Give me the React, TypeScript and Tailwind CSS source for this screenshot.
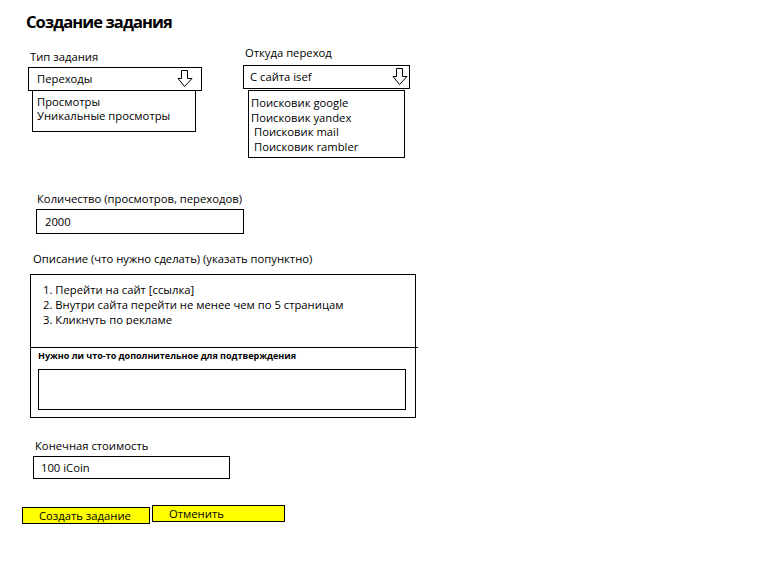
const ArrowDown = () => (
  <svg width="16" height="18" viewBox="0 0 16 18" className="shrink-0">
    <path
      d="M4.5 0.5 H10.5 V8.5 H15 L7.5 16.5 L1 8.5 H4.5 Z"
      fill="none"
      stroke="#000"
      strokeWidth="1"
    />
  </svg>
);

const sourceOptions = [
  { label: 'Поисковик google', pad: 'pl-[2px]' },
  { label: 'Поисковик yandex', pad: 'pl-[2px]' },
  { label: 'Поисковик mail', pad: 'pl-[5px]' },
  { label: 'Поисковик rambler', pad: 'pl-[5px]' },
];

export default function App() {
  return (
    <div className="h-[587px] w-[781px] overflow-hidden bg-white font-['Open_Sans',sans-serif] text-[11.25px] leading-[16px] text-black">
      <h1 className="ml-[26px] pt-[10px] text-[16.5px] font-bold leading-[24px] tracking-[-0.9px]">
        Создание задания
      </h1>

      <div className="mt-[9px] flex">
        <div className="ml-[28px] mt-[6px] w-[174px]">
          <div className="ml-[2px]">Тип задания</div>
          <div className="mt-[2px] flex h-[24px] items-center justify-between border border-black pl-[8px] pr-[8px]">
            <span>Переходы</span>
            <ArrowDown />
          </div>
          <div className="ml-[4px] -mt-px h-[42px] w-[164px] border border-black pl-[4px] pt-[4px] leading-[14px]">
            <div>Просмотры</div>
            <div>Уникальные просмотры</div>
          </div>
        </div>

        <div className="ml-[41px] mt-[2px] w-[167px]">
          <div className="ml-[2px]">Откуда переход</div>
          <div className="mt-[4px] flex h-[24px] items-center justify-between border border-black pl-[6px] pr-[1px]">
            <span>С сайта isef</span>
            <ArrowDown />
          </div>
          <div className="ml-[5px] mt-px h-[68px] w-[157px] border border-black pt-[5px] leading-[14.5px]">
            {sourceOptions.map((o) => (
              <div key={o.label} className={o.pad}>
                {o.label}
              </div>
            ))}
          </div>
        </div>
      </div>

      <div className="ml-[37px] mt-[33px]">Количество (просмотров, переходов)</div>
      <div className="ml-[36px] mt-[2px] flex h-[25px] w-[208px] items-center border border-black pl-[8px]">
        2000
      </div>

      <div className="ml-[33px] mt-[17px]">Описание (что нужно сделать) (указать попунктно)</div>
      <div className="ml-[30px] mt-[7px] w-[386px] border border-black">
        <div className="h-[72px] pl-[12px] pt-[7px]">
          <div className="h-[43px] overflow-hidden leading-[15px]">
            <div>1. Перейти на сайт [ссылка]</div>
            <div>2. Внутри сайта перейти не менее чем по 5 страницам</div>
            <div>3. Кликнуть по рекламе</div>
          </div>
        </div>
        <div className="-mr-[3px] border-t border-black" />
        <div className="px-[7px] pb-[7px] pt-[1px]">
          <div className="text-[9px] font-bold leading-[14px]">
            Нужно ли что-то дополнительное для подтверждения
          </div>
          <div className="mt-[6px] h-[41px] w-[368px] border border-black" />
        </div>
      </div>

      <div className="ml-[35px] mt-[20px]">Конечная стоимость</div>
      <div className="ml-[33px] mt-[2px] flex h-[23px] w-[197px] items-center border border-black pl-[7px]">
        100 iCoin
      </div>

      <div className="ml-[22px] mt-[27px] flex items-start gap-[2px]">
        <button className="mt-[1px] flex h-[17px] w-[128px] items-center border border-black bg-[#ffff00] pl-[16px] leading-[14px]">
          Создать задание
        </button>
        <button className="-mt-px flex h-[17px] w-[133px] items-center border border-black bg-[#ffff00] pl-[16px] leading-[14px]">
          Отменить
        </button>
      </div>
    </div>
  );
}
